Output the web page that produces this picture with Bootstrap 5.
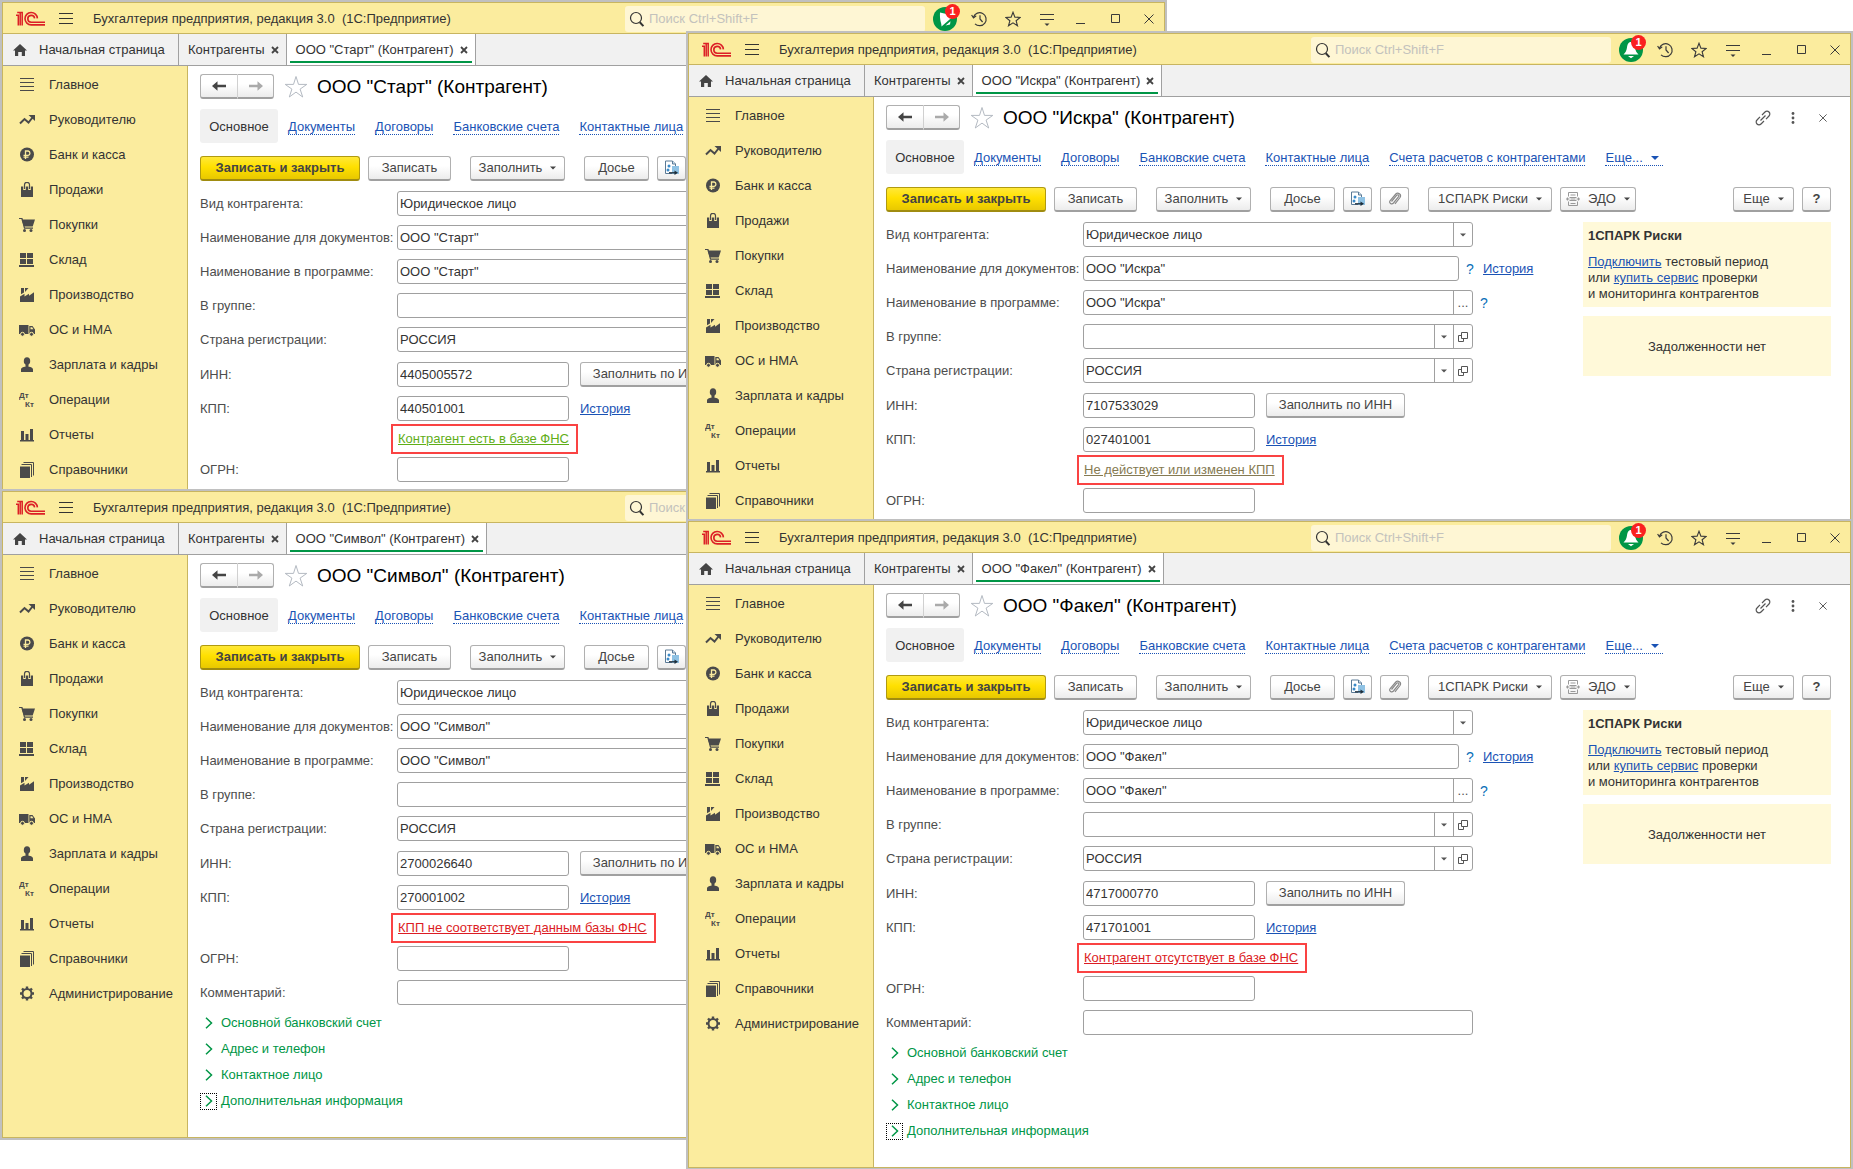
<!DOCTYPE html>
<html lang="ru">
<head>
<meta charset="utf-8">
<meta name="viewport" content="width=device-width, initial-scale=1">
<title>Бухгалтерия предприятия</title>
<link rel="stylesheet" href="https://cdn.jsdelivr.net/npm/bootstrap@5.3.0/dist/css/bootstrap.min.css">
<script src="https://cdn.jsdelivr.net/npm/bootstrap@5.3.0/dist/js/bootstrap.bundle.min.js"></script>
<style>
:root{--sand:#fbec9e;--olive:#c8b560;--edge:#a0a0a0;--ink:#333;--blue:#1a53b5;--green:#009646}
body{font-family:"Liberation Sans",Arial,sans-serif;font-size:13px;line-height:16px;color:var(--ink);background:#fff;overflow:hidden}
a{color:var(--blue)}
svg{display:block;flex:none}
/* two stacks of windows, the right one lies over the left one */
.desk{display:grid;grid-template-columns:minmax(0,686fr) minmax(0,481fr) minmax(0,686fr)}
.stack-l{grid-area:1/1/2/3}
.stack-r{grid-area:1/2/2/4;padding-top:31px;z-index:1}
.win{background:#fff;border:solid #c0c0c0;border-width:2px 2px 0;overflow:hidden}
.win.whole{border-bottom-width:2px}
.win-in{border:1px solid var(--olive);border-bottom-width:0}
.whole .win-in{border-bottom-width:1px}
.bar{background:var(--sand);height:31px;padding-top:1px;border-bottom:1px solid var(--olive)}
.logo{margin-left:13px}
.burger{margin-left:14px}
.cap{margin-left:20px;white-space:pre}
.search{width:300px;height:26px;margin-right:3px;background:#fef6d4;border-radius:3px}
.search input{font-size:13px;line-height:16px;color:var(--ink)}
.search input::placeholder{color:#c3c2bd;opacity:1}
.tools{margin-right:-2px}
.tool{width:34px;height:30px;border:0;background:none;padding:0;color:#3a3a3a}
.bell{position:relative}
.pip{position:absolute;left:17px;top:0;width:15px;height:15px;border-radius:50%;background:#fa2020;color:#fff;font-size:11px;line-height:15px;font-weight:700;text-align:center}
.tabs{height:32px;background:#f1f1f1;border-bottom:1px solid var(--edge)}
.tab{border:0;background:none;border-right:1px solid var(--edge);padding:0 7px 0 9px;gap:6px;color:var(--ink);white-space:nowrap}
.tab.home{padding:0 15px 0 10px;width:176px;gap:12px}
.tab.on{background:#fff;position:relative}
.tab.on::after{content:"";position:absolute;left:3px;right:3px;bottom:2px;height:2px;background:var(--green)}
.side{width:185px;background:var(--sand);border-right:1px solid var(--olive);padding-top:1px}
.side a{height:35px;padding-left:16px;gap:14px;color:var(--ink);text-decoration:none;white-space:nowrap}
.side svg{color:#4a4a4a}
.main{padding:8px 19px 7px 12px}
.stack-r .main{padding-bottom:6px}
.stack-l .whole .main,.stack-r .whole .main{padding-bottom:23px}
.b1c{height:25px;border:1px solid #b0b0b0;border-bottom:2px solid #a0a0a0;border-radius:3px;background:linear-gradient(#fff 40%,#ececec);color:#444;padding:0;font-size:13px;line-height:20px;white-space:nowrap}
.b1c.yel{background:linear-gradient(#ffe838,#ffe000 45%,#e8c800);border-color:#b09a10;border-bottom-color:#a08c10;font-weight:700;width:160px}
.w28{width:29px}.w61{width:61px}.w65{width:65px}.w76{width:76px}.w83{width:83px}.w95{width:95px}.w124{width:124px}.w139{width:139px}
.back{width:37px;border-radius:3px 0 0 3px;border-right-width:0}
.fwd{width:37px;border-radius:0 3px 3px 0;border-left-color:#d0d0d0;color:#aaa}
.fav{margin:0 9px 0 10px;color:#b4bac2}
.ttl{font-size:19px;line-height:24px;color:#000;font-weight:400;margin:0;white-space:nowrap}
.pages{margin-top:10px;gap:20px}
.pages .cur{background:#f1f1f1;border-radius:3px;height:34px;line-height:36px;width:78px;text-align:center;margin-right:-10px;color:var(--ink);text-decoration:none}
.dot{color:var(--blue);text-decoration:none;border-bottom:1px dotted var(--blue);line-height:14px;margin-top:2px;white-space:nowrap}
.cmd{margin-top:13px}
.fill,.dos{margin-left:19px}
.form-zone{margin-top:10px}
.line{height:25px;margin-bottom:9px;white-space:nowrap}
.line label{width:197px;flex:none;color:#4d4d4d}
.inn{margin-left:11px}
.line.num{margin-top:10px}
.line.last{margin-bottom:5px}
.box{height:25px;border:1px solid var(--edge);border-radius:3px;background:#fff;width:390px}
.box.doc{width:376px}.box.short{width:172px}
.box input,.box select{border:0;background:none;padding:0 0 0 2px;color:#333;min-width:0;appearance:none;outline:0;height:23px;font-size:13px}
.box button{width:19px;border:0;border-left:1px solid var(--edge);background:none;padding:0;color:#555}
.q{border:0;background:none;padding:0;color:#0a6fb8;font-size:14px;width:8px;margin:0 9px 0 7px}
.chk{height:36px;margin-top:-9px;padding-left:191px}
.frame{border:2px solid #fa4343;padding:3px 7px 3px 5px;line-height:20px}
.c-ok{color:#5fae18}.c-old{color:#857a52}.c-bad{color:#dc1c24}
.grp{height:26px;color:var(--green);border:0;background:none;padding:0;gap:4px}
.grp span{width:17px;height:17px}
.grp .foc{outline:1px dotted #000;outline-offset:-1px}
.note{background:#fff9d9;width:248px;padding:5px;color:#333}
.note h2{font-size:13px;line-height:17px;font-weight:700;margin:0 0 10px}
.note.mid{margin-top:9px;padding-top:7px;height:60px}
</style>
</head>
<body>
<svg width="0" height="0" class="position-absolute" aria-hidden="true"><defs>
<symbol id="i-logo" viewBox="0 0 29 15"><g fill="none" stroke="#dc1f26" stroke-width="1.6"><path d="M0 4.2h2.3v10.3M1.2 1.6h5V14.5M4.2 2v12.5" stroke-width="1.5"/><path d="M21.4 7.4a6.2 6.2 0 1 0-6.2 6.5H29"/><path d="M18.6 7.4a3.4 3.4 0 1 0-3.4 3.8H29"/></g></symbol>
<symbol id="i-burger" viewBox="0 0 14 13"><path d="M0 1.5h14M0 6.5h14M0 11.5h14" stroke="currentColor"/></symbol>
<symbol id="i-search" viewBox="0 0 16 16"><circle cx="7" cy="7" r="5.5" fill="none" stroke="#333" stroke-width="1.2"/><path d="m10.8 11.3 3.6 3.8" stroke="#333" stroke-width="2"/></symbol>
<symbol id="i-bell" viewBox="0 0 24 24"><circle cx="12" cy="12" r="12" fill="#009646"/><path d="M12 4c-2.800 0-3.600 2.500-4 5.500C7.600 12.500 6.500 14.500 4.500 16.500h15c-2-2-3.100-4-3.500-7-.4-3-1.200-5.500-4-5.500zM9 18h6l-3 2.200z" fill="#fff"/></symbol>
<symbol id="i-bell2" viewBox="0 0 24 24"><circle cx="12" cy="12" r="12" fill="#009646"/><path d="M7 5.500 13.500 7 20 9.500 8.500 19.500C8.700 16 6.500 14 7 5.500zM12.500 18.500l5-4.200-.5 3.200z" fill="#fff"/></symbol>
<symbol id="i-clock" viewBox="0 0 17 16"><g fill="none" stroke="currentColor" stroke-width="1.200"><path d="M2.500 6A6.500 6.500 0 1 1 4 12.800"/><path d="M9 4.200V8l2.600 3"/><path d="M.6 4 2.500 6.800 5.200 4.800"/></g></symbol>
<symbol id="i-fav" viewBox="0 0 16 16"><path d="m8 1.200 1.900 4.900 5.300.3-4.100 3.300 1.400 5.100L8 11.900l-4.500 2.900 1.400-5.100L.8 6.400l5.300-.3z" fill="none" stroke="currentColor" stroke-width="1.100"/></symbol>
<symbol id="i-star" viewBox="0 0 24 24"><path d="m12 1.500 2.500 7.900h8.300l-6.700 4.700 2.600 7.900-6.700-4.900L5.300 22l2.600-7.900L1.200 9.400h8.300z" fill="none" stroke="currentColor"/></symbol>
<symbol id="i-menu" viewBox="0 0 14 14"><path d="M0 2.500h14M0 7.500h14" stroke="currentColor" stroke-width="1.200"/><path d="M4.500 11.500h5L7 14z" fill="currentColor"/></symbol>
<symbol id="i-min" viewBox="0 0 10 10"><path d="M0 9.500h9" stroke="currentColor"/></symbol>
<symbol id="i-max" viewBox="0 0 9 9"><path d="M.5.5h8v8h-8z" fill="none" stroke="currentColor"/></symbol>
<symbol id="i-x" viewBox="0 0 10 10"><path d="m.5.5 9 9m0-9-9 9" stroke="currentColor"/></symbol>
<symbol id="i-xb" viewBox="0 0 8 8"><path d="m1 1 6 6m0-6L1 7" stroke="#444" stroke-width="1.800"/></symbol>
<symbol id="i-home" viewBox="0 0 14 12"><path d="M7 0 14 6.500h-2V12H8.800V8H5.200v4H2V6.500H0z" fill="#444"/></symbol>
<symbol id="i-left" viewBox="0 0 14 10"><path d="M0 5 5.500.3V3.700H14v2.600H5.500v3.400z" fill="currentColor"/></symbol>
<symbol id="i-right" viewBox="0 0 14 10"><path d="M14 5 8.500.3V3.700H0v2.600h8.500v3.400z" fill="currentColor"/></symbol>
<symbol id="i-link" viewBox="0 0 16 16"><g fill="none" stroke="#555" stroke-width="1.200"><path d="m7 5 3-3a2.700 2.700 0 0 1 4 4l-3 3.200M9 11l-3 3a2.700 2.700 0 0 1-4-4l3-3.200M5.500 10.500l5-5"/></g></symbol>
<symbol id="i-dots" viewBox="0 0 4 12"><g fill="#555"><circle cx="2" cy="1.500" r="1.400"/><circle cx="2" cy="6" r="1.400"/><circle cx="2" cy="10.500" r="1.400"/></g></symbol>
<symbol id="i-car" viewBox="0 0 6 4"><path d="M0 .5h6L3 3.500z" fill="currentColor"/></symbol>
<symbol id="i-open" viewBox="0 0 10 10"><path d="M3.500.5h6v6h-6zM3.500 3.500h-3v6h5v-3" fill="none" stroke="#555"/></symbol>
<symbol id="i-doc" viewBox="0 0 16 16"><path d="M1.500 1h7l3 3v9.500h-10z" fill="#fff" stroke="#5a7a96"/><path d="M8.500 1v3h3" fill="#cfe0ee" stroke="#5a7a96"/><circle cx="5" cy="6" r="1.500" fill="#3a8ac8"/><circle cx="4" cy="10" r="1.500" fill="#3a8ac8"/><path d="M8 6h7v8H8z" fill="#8fc2e4"/><path d="M5 12.800h6" stroke="#1e2e3a" stroke-width="1.300"/><path d="m10.500 10.500 3.500 2.300-3.500 2.300z" fill="#1e2e3a"/></symbol>
<symbol id="i-clip" viewBox="0 0 14 14"><path d="m3.500 9.500 5.300-6.300c1-1 2.700.2 1.800 1.500L5.500 11c-1.800 2-5 0-3.300-2.500L7.800 2C9.800 0 14 2.300 12 5.500L7 11.800" fill="none" stroke="#888" stroke-width="1.200"/></symbol>
<symbol id="i-edo" viewBox="0 0 14 14"><g fill="none" stroke="#999"><path d="M2.500 4.500v-4h9v4M2.500 9.500v4h9v-4M4.500 3h5M4.500 11.500h5M3.500 5.500h7M4.500 7h5M3.500 8.500h7"/><path d="M0 7h3.500M10.500 7H14M1.500 5.500v3M12.500 5.500v3" stroke-width="1.200"/></g></symbol>
<symbol id="i-chev" viewBox="0 0 8 12"><path d="M1 .8 6.500 6 1 11.200" fill="none" stroke="#009646" stroke-width="1.500"/></symbol>
<symbol id="s-0" viewBox="0 0 16 16"><path d="M1 1.500h14M1 5.500h14M1 9.500h14M1 13.500h14" stroke="currentColor"/></symbol>
<symbol id="s-1" viewBox="0 0 16 16"><path d="M1 11.500 5.500 7l4 3.500 4-5" fill="none" stroke="currentColor" stroke-width="2"/><path d="M9.500 3H16v6z" fill="currentColor"/></symbol>
<symbol id="s-2" viewBox="0 0 16 16"><circle cx="8" cy="7.500" r="7" fill="currentColor"/><path d="M6.500 12V4h2.700a2.200 2.200 0 0 1 0 4.300H4.500M4.500 10.200h5" fill="none" stroke="#fbec9e" stroke-width="1.300"/></symbol>
<symbol id="s-3" viewBox="0 0 16 16"><path d="M2 4.500h12V15H2z" fill="currentColor"/><path d="M5.500 8V3a2.500 2.500 0 0 1 5 0V8" fill="none" stroke="#fbec9e" stroke-width="2.600"/><path d="M5.500 7V2.800a2.500 2.500 0 0 1 5 0V7" fill="none" stroke="currentColor" stroke-width="1.200"/></symbol>
<symbol id="s-4" viewBox="0 0 16 16"><path d="M2.500 2.500H16l-2.300 7H5z" fill="currentColor"/><path d="M0 1.500h3l2.500 9.700h8.500" fill="none" stroke="currentColor" stroke-width="1.200"/><circle cx="5.500" cy="13.500" r="1.500" fill="currentColor"/><circle cx="12" cy="13.500" r="1.500" fill="currentColor"/></symbol>
<symbol id="s-5" viewBox="0 0 16 16"><path d="M1 1h6v5H1zM8 1h6v5H8zM1 7h6v5H1zM8 7h6v5H8zM0 13h15v2H0z" fill="currentColor"/></symbol>
<symbol id="s-6" viewBox="0 0 16 16"><path d="M1 15V9.500l4.500-2.700v2.700L10 6.800v2l5-3.600V15z" fill="currentColor"/><path d="M2 1h3v4.500L2 7.300zM6 1h3.500L6 5z" fill="currentColor"/></symbol>
<symbol id="s-7" viewBox="0 0 16 16"><path d="M0 3h9.500v9H0zM10.300 4h3.200L16 7.500V12h-5.700z" fill="currentColor"/><path d="M11.500 5.200h1.700l1.200 2h-2.900z" fill="#fbec9e"/><g fill="currentColor" stroke="#fbec9e"><circle cx="3.500" cy="12.300" r="2"/><circle cx="12.500" cy="12.300" r="2"/></g></symbol>
<symbol id="s-8" viewBox="0 0 16 16"><ellipse cx="8" cy="4" rx="3.200" ry="3.800" fill="currentColor"/><path d="M6.500 7h3v3h-3zM2 15v-2.500C2 10.500 5 9.500 8 9.500s6 1 6 3V15z" fill="currentColor"/></symbol>
<symbol id="s-9" viewBox="0 0 16 16"><g fill="currentColor" font-family="Liberation Sans" font-weight="700" font-size="8"><text x="0" y="6">Дт</text><text x="6" y="15">Кт</text></g></symbol>
<symbol id="s-10" viewBox="0 0 16 16"><path d="M2 4h3v9H2zM6.500 7h3v6h-3zM11 2h3v11h-3zM1 13h14v1.500H1z" fill="currentColor"/></symbol>
<symbol id="s-11" viewBox="0 0 16 16"><path d="M1 4.500h10V16H1z" fill="currentColor"/><path d="M2.500 2.500h10V15M4.500.5h10v13" fill="none" stroke="currentColor"/></symbol>
<symbol id="s-12" viewBox="0 0 16 16"><circle cx="8" cy="7.500" r="4.500" fill="none" stroke="currentColor" stroke-width="2"/><path d="M8 .5V3M8 12v2.500M1 7.500h2.500M12.500 7.500H15M3 2.500l1.900 1.900M11.100 10.600l1.900 1.900M13 2.500l-1.900 1.900M4.900 10.600 3 12.500" stroke="currentColor" stroke-width="2.400"/></symbol>
</defs></svg>

<main class="desk">
  <div class="stack-l" id="left"></div>
  <div class="stack-r" id="right"></div>
</main>

<script>
const ic = (id, w, h = w, c = '') => `<svg width="${w}" height="${h}" class="${c}" aria-hidden="true"><use href="#${id}"/></svg>`;
const sections = ['Главное','Руководителю','Банк и касса','Продажи','Покупки','Склад','Производство','ОС и НМА','Зарплата и кадры','Операции','Отчеты','Справочники','Администрирование'];
const car = ic('i-car', 6, 4);

function win(o) {
  const id = n => `${o.key}-${n}`;
  const name = `ООО "${o.name}"`, val = name.replace(/"/g, '&quot;');
  const line = (n, label, field, after = '', cls = '') =>
    `<div class="line d-flex align-items-center ${cls}"><label for="${id(n)}">${label}</label>${field}${after}</div>`;
  const box = (n, v, cls = '', btns = '') =>
    `<div class="box d-flex ${cls}"><input type="text" class="flex-grow-1" id="${id(n)}" value="${v}">${btns}</div>`;
  const small = (icon, t) => `<button type="button" class="d-flex align-items-center justify-content-center" aria-label="${t}">${icon}</button>`;
  const drop = small(car, 'Выбрать'), open = small(ic('i-open', 10), 'Открыть');
  const help = o.full ? '<button type="button" class="q">?</button>' : '';
  const btn = (t, cls) => `<button type="button" class="b1c d-flex align-items-center justify-content-center ${cls}">${t}</button>`;

  return `<section class="win ${o.whole ? 'whole' : ''}"><div class="win-in">
  <header class="bar d-flex align-items-center">
    ${ic('i-logo', 29, 15, 'logo')}${ic('i-burger', 14, 13, 'burger')}
    <span class="cap flex-grow-1">Бухгалтерия предприятия, редакция 3.0  (1С:Предприятие)</span>
    <div class="search d-flex align-items-center ps-1">${ic('i-search', 16)}
      <input type="search" class="border-0 bg-transparent p-0 ps-1 flex-grow-1" placeholder="Поиск Ctrl+Shift+F" aria-label="Поиск"></div>
    <div class="tools d-flex">
    <button type="button" class="tool bell d-flex align-items-center justify-content-center">${ic(o.bell || 'i-bell', 24)}<span class="pip">1</span></button>
    ${[['i-clock',17,16],['i-fav',16],['i-menu',14],['i-min',10],['i-max',9],['i-x',10]].map(a =>
      `<button type="button" class="tool d-flex align-items-center justify-content-center">${ic(...a)}</button>`).join('')}
    </div>
  </header>
  <nav class="tabs d-flex">
    <button type="button" class="tab home d-flex align-items-center">${ic('i-home', 14, 12)}Начальная страница</button>
    <button type="button" class="tab d-flex align-items-center">Контрагенты${ic('i-xb', 8)}</button>
    <button type="button" class="tab on d-flex align-items-center">${name} (Контрагент)${ic('i-xb', 8)}</button>
  </nav>
  <div class="d-flex">
    <nav class="side flex-shrink-0">
      ${sections.slice(0, o.whole ? 13 : 12).map((s, i) => `<a href="#" class="d-flex align-items-center">${ic('s-' + i, 16)}${s}</a>`).join('')}
    </nav>
    <div class="main flex-grow-1">
      <div class="d-flex align-items-center">
        ${btn(ic('i-left', 14, 10), 'back')}${btn(ic('i-right', 14, 10), 'fwd')}
        <span class="fav">${ic('i-star', 24)}</span>
        <h1 class="ttl flex-grow-1">${name} (Контрагент)</h1>
        ${o.full ? `<span class="d-flex align-items-center pe-1">${ic('i-link', 16, 16, 'me-3')}${ic('i-dots', 4, 12, 'ms-1 me-4')}${ic('i-x', 8)}</span>` : ''}
      </div>
      <nav class="pages d-flex align-items-center">
        <a href="#" class="cur">Основное</a>
        ${['Документы','Договоры','Банковские счета','Контактные лица'].concat(o.full ? ['Счета расчетов с контрагентами'] : []).map(t => `<a href="#" class="dot">${t}</a>`).join('')}
        ${o.full ? `<a href="#" class="dot d-flex align-items-center gap-2 pe-1">Еще...${ic('i-car', 8, 6)}</a>` : ''}
      </nav>
      <div class="cmd d-flex">
        ${btn('Записать и закрыть', 'yel me-2')}${btn('Записать', 'w83')}
        ${btn('Заполнить' + ic('i-car', 6, 4, 'ms-2'), 'w95 fill')}${btn('Досье', 'w65 dos')}${btn(ic('i-doc', 16), 'w28 ms-2')}
        ${o.full ? btn(ic('i-clip', 14), 'w28 ms-2') + btn('1СПАРК Риски' + ic('i-car', 6, 4, 'ms-2'), 'w124 dos') + btn(ic('i-edo', 14, 14, 'me-2') + 'ЭДО' + ic('i-car', 6, 4, 'ms-2'), 'w76 ms-2')
          + btn('Еще' + ic('i-car', 6, 4, 'ms-2'), 'w61 ms-auto') + btn('<b>?</b>', 'w28 ms-2') : ''}
      </div>
      <div class="form-zone d-flex justify-content-between">
        <form>
          ${line('kind', 'Вид контрагента:', `<div class="box d-flex"><select class="flex-grow-1" id="${id('kind')}"><option>Юридическое лицо</option></select>${o.full ? drop : ''}</div>`)}
          ${line('doc', 'Наименование для документов:', box('doc', val, o.full ? 'doc' : ''), o.full ? help + '<a href="#">История</a>' : '')}
          ${line('prog', 'Наименование в программе:', box('prog', val, '', o.full ? small('...', 'Подбор') : ''), help)}
          ${line('grp', 'В группе:', box('grp', '', '', o.full ? drop + open : ''))}
          ${line('land', 'Страна регистрации:', box('land', 'РОССИЯ', '', o.full ? drop + open : ''))}
          ${line('inn', 'ИНН:', box('inn', o.inn, 'short'), btn('Заполнить по ИНН', 'w139 inn'), 'num')}
          ${line('kpp', 'КПП:', box('kpp', o.kpp, 'short'), '<a href="#" class="inn">История</a>')}
          <div class="chk d-flex align-items-center"><span class="frame"><a href="#" class="${o.cls}">${o.msg}</a></span></div>
          ${line('ogrn', 'ОГРН:', box('ogrn', '', 'short'), '', o.whole ? '' : 'mb-0')}
          ${o.whole ? line('note', 'Комментарий:', box('note', ''), '', 'last') +
            ['Основной банковский счет','Адрес и телефон','Контактное лицо','Дополнительная информация'].map((t, i) =>
            `<button type="button" class="grp d-flex align-items-center"><span class="d-flex align-items-center justify-content-center ${i == 3 ? 'foc' : ''}">${ic('i-chev', 8, 12)}</span>${t}</button>`).join('') : ''}
        </form>
        ${o.full ? `<aside>
          <div class="note"><h2>1СПАРК Риски</h2><a href="#">Подключить</a> тестовый период<br>или <a href="#">купить сервис</a> проверки<br>и мониторинга контрагентов</div>
          <div class="note mid d-flex align-items-center justify-content-center">Задолженности нет</div></aside>` : ''}
      </div>
    </div>
  </div></div></section>`;
}

document.getElementById('left').innerHTML =
  win({key:'start', name:'Старт', inn:'4405005572', kpp:'440501001', cls:'c-ok', msg:'Контрагент есть в базе ФНС', bell:'i-bell2'}) +
  win({key:'symbol', name:'Символ', inn:'2700026640', kpp:'270001002', cls:'c-bad', msg:'КПП не соответствует данным базы ФНС', whole:true});
document.getElementById('right').innerHTML =
  win({key:'iskra', name:'Искра', inn:'7107533029', kpp:'027401001', cls:'c-old', msg:'Не действует или изменен КПП', full:true}) +
  win({key:'fakel', name:'Факел', inn:'4717000770', kpp:'471701001', cls:'c-bad', msg:'Контрагент отсутствует в базе ФНС', full:true, whole:true});
</script>
</body>
</html>
